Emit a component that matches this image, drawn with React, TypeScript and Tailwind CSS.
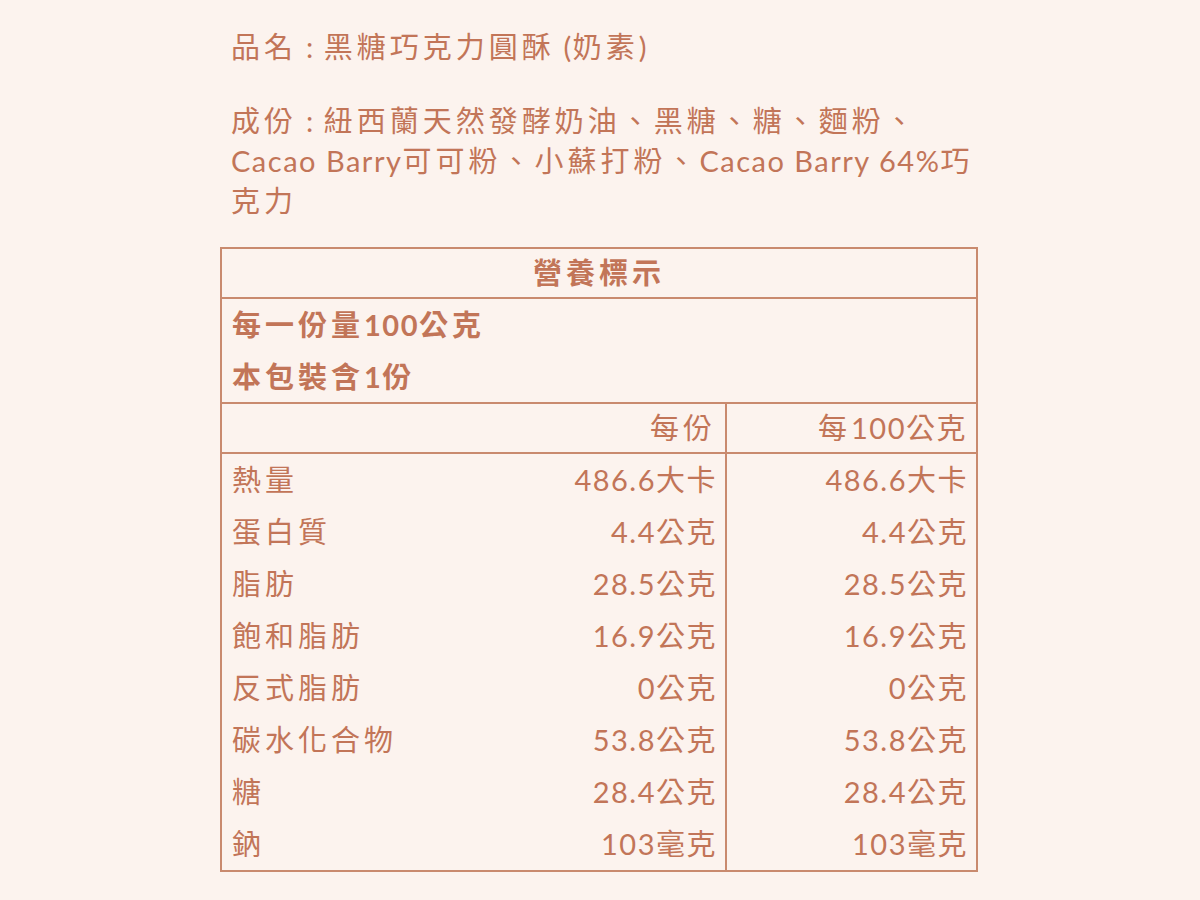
const rows: [string, string, string][] = [
  ["熱量", "486.6大卡", "486.6大卡"],
  ["蛋白質", "4.4公克", "4.4公克"],
  ["脂肪", "28.5公克", "28.5公克"],
  ["飽和脂肪", "16.9公克", "16.9公克"],
  ["反式脂肪", "0公克", "0公克"],
  ["碳水化合物", "53.8公克", "53.8公克"],
  ["糖", "28.4公克", "28.4公克"],
  ["鈉", "103毫克", "103毫克"],
];

// CJK runs sit a little wider than the latin ones
function W({ children }: { children: string }) {
  return <span className="tracking-[4px]">{children}</span>;
}

export default function App() {
  return (
    <div
      className="min-h-[900px] w-[1200px] bg-[#fcf3ee] text-[29px] tracking-[1.5px] text-[#c27558]"
      style={{ fontFamily: '"Lato", "Noto Sans CJK TC", sans-serif' }}
    >
      <div className="whitespace-nowrap pl-[231px] pt-[27px]">
        <p className="leading-[40px]">
          <W>品名</W> : <W>黑糖巧克力圓酥</W> (<W>奶素</W>)
        </p>
        <div className="mt-[34px] leading-[40px]">
          <p>
            <W>成份</W> : <W>紐西蘭天然發酵奶油、黑糖、糖、麵粉、</W>
          </p>
          <p>
            Cacao Barry<W>可可粉、小蘇打粉、</W>Cacao Barry 64%<W>巧</W>
          </p>
          <p>
            <W>克力</W>
          </p>
        </div>
      </div>

      <div className="ml-[220px] mt-[26px] w-[758px] border-2 border-[#c98a6e]">
        <div className="flex h-[50px] items-center justify-center border-b-2 border-[#c98a6e] font-bold">
          <W>營養標示</W>
        </div>
        <div className="border-b-2 border-[#c98a6e] px-[10px] font-bold">
          <div className="flex h-[52px] items-center">
            <W>每一份量</W>100<W>公克</W>
          </div>
          <div className="flex h-[51px] items-center">
            <W>本包裝含</W>1<W>份</W>
          </div>
        </div>
        <div className="grid grid-cols-[505px_1fr]">
          <div className="flex h-[50px] items-center justify-end border-b-2 border-r-2 border-[#c98a6e] px-[9px]">
            <W>每份</W>
          </div>
          <div className="flex h-[50px] items-center justify-end border-b-2 border-[#c98a6e] px-[9px]">
            <W>每</W>100公克
          </div>
          {rows.map(([name, a, b]) => (
            <div key={name} className="contents">
              <div className="flex h-[52px] items-center justify-between border-r-2 border-[#c98a6e] pl-[10px] pr-[8px]">
                <W>{name}</W>
                <span>{a}</span>
              </div>
              <div className="flex h-[52px] items-center justify-end pr-[8px]">{b}</div>
            </div>
          ))}
        </div>
      </div>
    </div>
  );
}
